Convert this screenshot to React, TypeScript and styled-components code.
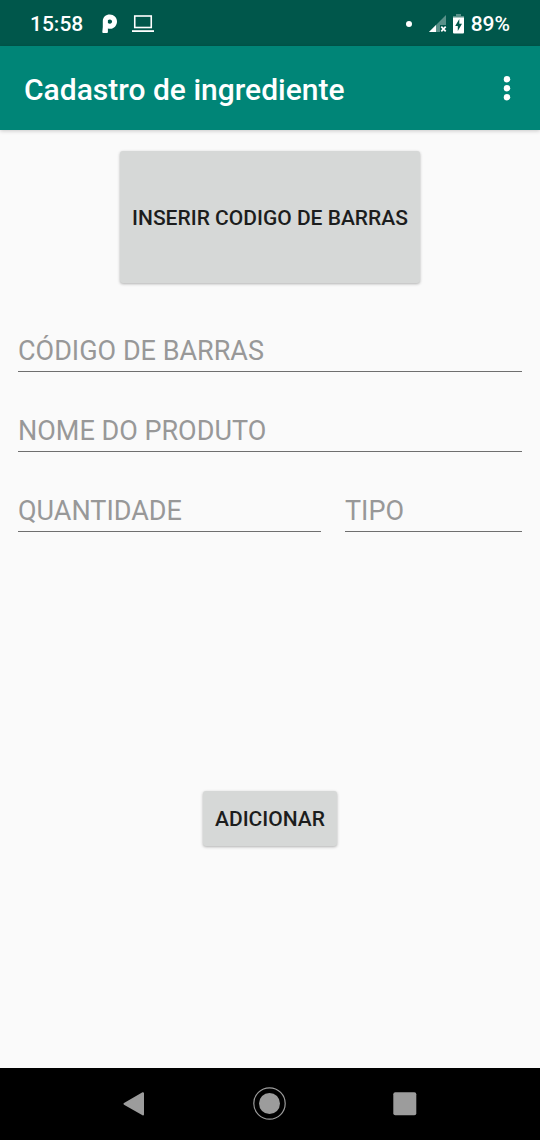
import React from "react";
import styled, { createGlobalStyle } from "styled-components";

const GlobalStyle = createGlobalStyle`
  *, *::before, *::after { box-sizing: border-box; }
  body {
    margin: 0;
    background: #fafafa;
    font-family: Roboto, "Liberation Sans", sans-serif;
  }
`;

const Screen = styled.div`
  display: flex;
  flex-direction: column;
  min-height: 100vh;
`;

const StatusBar = styled.div`
  display: flex;
  align-items: center;
  justify-content: space-between;
  height: 46px;
  padding: 2px 30px 0;
  background: #00574b;
  color: #fff;
  font-size: 21px;
  font-weight: 500;
  line-height: 24px;
`;

const StatusGroup = styled.div<{ $gap: number }>`
  display: flex;
  align-items: center;
  gap: ${(p) => p.$gap}px;
`;

const Clock = styled.span`
  margin-right: 4px;
`;

const Dot = styled.span`
  width: 6px;
  height: 6px;
  margin-right: 11px;
  border-radius: 50%;
  background: #fff;
`;

const AppBar = styled.header`
  display: flex;
  align-items: center;
  justify-content: space-between;
  height: 84px;
  padding: 0 18px 0 24px;
  background: #008577;
  box-shadow: 0 1px 4px rgba(0, 0, 0, 0.2);
`;

const Title = styled.h1`
  margin: 0;
  padding-top: 4px;
  color: #fff;
  font-size: 30px;
  font-weight: 500;
  line-height: 36px;
`;

const MenuButton = styled.button`
  display: flex;
  padding: 6px;
  border: 0;
  background: none;
  cursor: pointer;
`;

const Form = styled.form`
  display: flex;
  flex: 1;
  flex-direction: column;
  padding: 21px 18px 0;
`;

const RaisedButton = styled.button<{ $tall?: boolean }>`
  align-self: center;
  height: ${(p) => (p.$tall ? 132 : 55)}px;
  padding: ${(p) => (p.$tall ? 2 : 0)}px 12px 0;
  border: 0;
  border-radius: 3px;
  background: #d6d8d7;
  box-shadow: 0 1px 3px rgba(0, 0, 0, 0.3);
  color: #1c1d1d;
  font-family: inherit;
  font-size: 21px;
  font-weight: 500;
  line-height: 24px;
  text-transform: uppercase;
  white-space: nowrap;
  cursor: pointer;
`;

const Fields = styled.div`
  display: flex;
  flex-direction: column;
  gap: 32px;
  margin: 41px 0 259px;
`;

const FieldRow = styled.div`
  display: grid;
  grid-template-columns: 303fr 177fr;
  gap: 24px;
`;

const TextField = styled.input`
  width: 100%;
  min-width: 0;
  height: 48px;
  padding: 6px 0 0;
  border: 0;
  border-bottom: 1px solid #6f6f6f;
  border-radius: 0;
  outline: 0;
  background: transparent;
  color: #212121;
  font-family: inherit;
  font-size: 27px;
  line-height: 32px;

  &::placeholder {
    color: #989898;
    opacity: 1;
  }
`;

const NavBar = styled.nav`
  display: grid;
  grid-template-columns: repeat(3, 1fr);
  align-items: center;
  height: 72px;
  padding: 0 12.5%;
  background: #000;
`;

const NavButton = styled.button`
  display: flex;
  justify-content: center;
  padding: 0;
  border: 0;
  background: none;
  cursor: pointer;
`;

const AppIcon = () => (
  <svg width="15" height="20" viewBox="0 0 15 20" aria-hidden="true">
    <path
      fillRule="evenodd"
      fill="#fff"
      d="M.8 7.300C.8 3.200 3.800.5 7.800.5c4 0 7.200 2.900 7.200 6.900s-3 7.400-6.800 7.400c-.8 0-1.600-.1-2.300-.4v3.600c0 .6-.3 1-.9 1H1.200c-.6 0-.9-.4-.9-1 0-1.700.5-3.400.5-5ZM5.900 6.200v2.900c.6.500 1.300.7 2 .7 1.300 0 2.200-1 2.200-2.200S9.200 5.400 7.900 5.400c-.8 0-1.500.3-2 .8Z"
    />
  </svg>
);

const LaptopIcon = () => (
  <svg width="22" height="18" viewBox="0 0 22 18" aria-hidden="true">
    <rect x="2.750" y="1" width="16.500" height="11.500" fill="none" stroke="#fff" strokeWidth="1.600" />
    <path d="M0 15.200h22v1.800H0z" fill="#fff" />
  </svg>
);

const SignalIcon = () => (
  <svg width="18" height="18" viewBox="0 0 18 18" aria-hidden="true">
    <path d="M0 17 17 0V10H11v7z" fill="#fff" fillOpacity=".35" />
    <path d="M0 17 7 10v7z" fill="#fff" />
    <path d="m12.300 11.600 4.400 4.800m0-4.800-4.400 4.800" stroke="#fff" strokeWidth="1.700" fill="none" />
  </svg>
);

const BatteryIcon = () => (
  <svg width="12" height="20" viewBox="0 0 12 20" aria-hidden="true">
    <path d="M3 0h5v2h3v2H0V2h3z" fill="#fff" fillOpacity=".35" />
    <path d="M0 3.500h11v15a1 1 0 0 1-1 1H1a1 1 0 0 1-1-1z" fill="#fff" />
    <path d="M6.300 5 2.200 12h2.600v5l4.200-7.200H6.300z" fill="#00574b" />
  </svg>
);

const MoreIcon = () => (
  <svg width="18" height="30" viewBox="0 0 18 30" aria-hidden="true">
    <g fill="#fff">
      <circle cx="9" cy="6.200" r="3.200" />
      <circle cx="9" cy="15.200" r="3.200" />
      <circle cx="9" cy="24.200" r="3.200" />
    </g>
  </svg>
);

const BackIcon = () => (
  <svg width="24" height="26" viewBox="0 0 24 26" aria-hidden="true">
    <path
      d="M1.500 12.800 20 2.200v21.200z"
      fill="#9c9c9c"
      stroke="#9c9c9c"
      strokeWidth="2"
      strokeLinejoin="round"
    />
  </svg>
);

const HomeIcon = () => (
  <svg width="34" height="34" viewBox="0 0 34 34" aria-hidden="true">
    <circle cx="16.500" cy="16.500" r="15.700" fill="none" stroke="#9c9c9c" strokeWidth="1.200" />
    <circle cx="16.500" cy="16.500" r="10.500" fill="#9c9c9c" />
  </svg>
);

const RecentsIcon = () => (
  <svg width="24" height="24" viewBox="0 0 24 24" aria-hidden="true">
    <rect x=".3" y=".3" width="23" height="23" rx="2" fill="#9c9c9c" />
  </svg>
);

export default function App() {
  return (
    <Screen>
      <GlobalStyle />
      <StatusBar>
        <StatusGroup $gap={15}>
          <Clock>15:58</Clock>
          <AppIcon />
          <LaptopIcon />
        </StatusGroup>
        <StatusGroup $gap={6}>
          <Dot />
          <SignalIcon />
          <BatteryIcon />
          <span>89%</span>
        </StatusGroup>
      </StatusBar>
      <AppBar>
        <Title>Cadastro de ingrediente</Title>
        <MenuButton type="button" aria-label="Mais opções">
          <MoreIcon />
        </MenuButton>
      </AppBar>
      <Form onSubmit={(e) => e.preventDefault()}>
        <RaisedButton type="button" $tall>
          Inserir codigo de barras
        </RaisedButton>
        <Fields>
          <TextField aria-label="Código de barras" placeholder="CÓDIGO DE BARRAS" />
          <TextField aria-label="Nome do produto" placeholder="NOME DO PRODUTO" />
          <FieldRow>
            <TextField aria-label="Quantidade" placeholder="QUANTIDADE" />
            <TextField aria-label="Tipo" placeholder="TIPO" />
          </FieldRow>
        </Fields>
        <RaisedButton type="submit">Adicionar</RaisedButton>
      </Form>
      <NavBar>
        <NavButton type="button" aria-label="Voltar">
          <BackIcon />
        </NavButton>
        <NavButton type="button" aria-label="Início">
          <HomeIcon />
        </NavButton>
        <NavButton type="button" aria-label="Recentes">
          <RecentsIcon />
        </NavButton>
      </NavBar>
    </Screen>
  );
}
